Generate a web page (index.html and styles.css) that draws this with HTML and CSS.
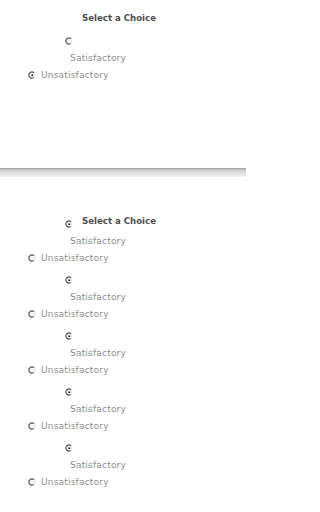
FILE: index.html
```html
<!DOCTYPE html>
<html>
<head>
<meta charset="utf-8">
<link rel="stylesheet" href="styles.css">
</head>
<body>
<svg class="defs" width="0" height="0">
  <symbol id="r-off" viewBox="0 0 8 8">
    <circle cx="4" cy="4" r="3" fill="#fff" stroke="#e0e0e0" stroke-width="1"/>
    <path d="M6.1 1.9 A3 3 0 1 0 5.6 6.5" fill="none" stroke="#5a5a5a" stroke-width="1.2"/>
  </symbol>
  <symbol id="r-on" viewBox="0 0 8 8">
    <circle cx="4" cy="4" r="3" fill="#fff" stroke="#e0e0e0" stroke-width="1"/>
    <path d="M6.1 1.9 A3 3 0 1 0 5.6 6.5" fill="none" stroke="#5a5a5a" stroke-width="1.2"/>
    <circle cx="4.3" cy="4.3" r="1" fill="#222"/>
  </symbol>
</svg>

<section class="panel top">
  <div class="title-row"><span class="title">Select a Choice</span></div>
  <div class="row radio-row"><svg class="radio"><use href="#r-off"/></svg></div>
  <div class="row sat-row">Satisfactory</div>
  <div class="row unsat-row"><svg class="radio"><use href="#r-on"/></svg><span>Unsatisfactory</span></div>
</section>

<div class="divider"></div>

<section class="panel bottom">
  <div class="group">
    <div class="row radio-row"><svg class="radio"><use href="#r-on"/></svg><span class="title raised">Select a Choice</span></div>
    <div class="row sat-row">Satisfactory</div>
    <div class="row unsat-row"><svg class="radio"><use href="#r-off"/></svg><span>Unsatisfactory</span></div>
  </div>
  <div class="group">
    <div class="row radio-row"><svg class="radio"><use href="#r-on"/></svg></div>
    <div class="row sat-row">Satisfactory</div>
    <div class="row unsat-row"><svg class="radio"><use href="#r-off"/></svg><span>Unsatisfactory</span></div>
  </div>
  <div class="group">
    <div class="row radio-row"><svg class="radio"><use href="#r-on"/></svg></div>
    <div class="row sat-row">Satisfactory</div>
    <div class="row unsat-row"><svg class="radio"><use href="#r-off"/></svg><span>Unsatisfactory</span></div>
  </div>
  <div class="group">
    <div class="row radio-row"><svg class="radio"><use href="#r-on"/></svg></div>
    <div class="row sat-row">Satisfactory</div>
    <div class="row unsat-row"><svg class="radio"><use href="#r-off"/></svg><span>Unsatisfactory</span></div>
  </div>
  <div class="group">
    <div class="row radio-row"><svg class="radio"><use href="#r-on"/></svg></div>
    <div class="row sat-row">Satisfactory</div>
    <div class="row unsat-row"><svg class="radio"><use href="#r-off"/></svg><span>Unsatisfactory</span></div>
  </div>
</section>
</body>
</html>
```

FILE: styles.css
```css
html, body {
  margin: 0;
  padding: 0;
  background: #fff;
}
body {
  width: 246px;
  font-family: "DejaVu Sans", Verdana, sans-serif;
  font-size: 9px;
  letter-spacing: 0.2px;
  color: #8c8c8c;
}
.defs {
  position: absolute;
  width: 0;
  height: 0;
}
.panel.top {
  height: 168px;
  padding-top: 10px;
  box-sizing: border-box;
}
.title-row {
  height: 16px;
  display: flex;
  align-items: center;
  padding-left: 82px;
  margin-bottom: 7px;
}
.title {
  font-weight: bold;
  color: #4d4d4d;
  font-size: 8.6px;
  letter-spacing: 0;
}
.title.raised {
  margin-bottom: 7px;
}
.row {
  display: flex;
  align-items: center;
  height: 17px;
}
.radio-row {
  height: 16px;
  padding-left: 65px;
  gap: 9px;
}
.sat-row {
  padding-left: 70px;
}
.unsat-row {
  padding-left: 28px;
  gap: 5px;
}
.radio {
  width: 8px;
  height: 8px;
  flex: none;
}
.divider {
  height: 9px;
  background: linear-gradient(#a0a0a0 0, #c8c8c8 20%, #dedede 50%, #eaeaea 80%, #f3f3f3 100%);
}
.panel.bottom {
  padding-top: 39px;
}
.group {
  margin-bottom: 6px;
}
```
